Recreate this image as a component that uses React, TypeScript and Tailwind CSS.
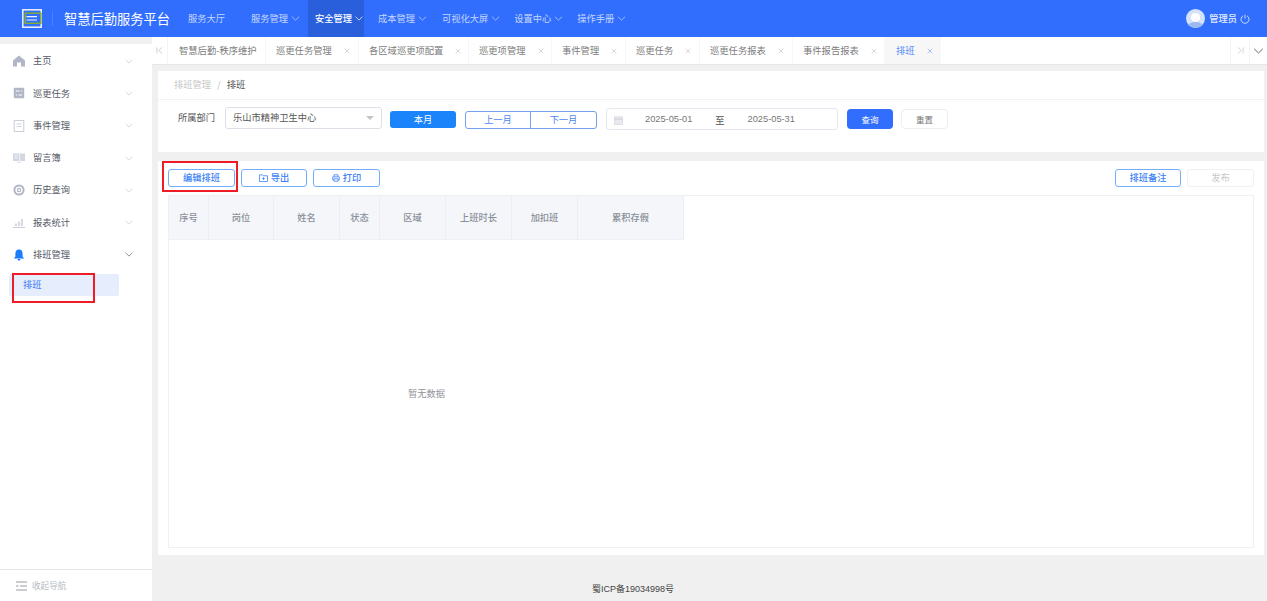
import React from "react";

const font = { fontFamily: '"Noto Sans CJK SC", "Liberation Sans", sans-serif' };

function Chev({ className = "" }: { className?: string }) {
  return (
    <svg viewBox="0 0 10 6" className={className} fill="none" stroke="currentColor" strokeWidth="0.9">
      <path d="M0.7 0.8 L5 5 L9.3 0.8" />
    </svg>
  );
}

function X() {
  return (
    <svg viewBox="0 0 8 8" className="h-[6px] w-[6px]" fill="none" stroke="currentColor" strokeWidth="1">
      <path d="M1 1 L7 7 M7 1 L1 7" />
    </svg>
  );
}

function NavItem({ label, cls }: { label: string; cls: string }) {
  return (
    <div className={`flex items-center text-[9.25px] text-[#c4d6ff] ${cls}`}>
      <span>{label}</span>
      <Chev className="ml-[3px] h-[5px] w-[9px]" />
    </div>
  );
}

function Header() {
  return (
    <header className="flex h-[37px] shrink-0 items-center bg-[#316efe] text-white">
      <svg viewBox="0 0 20 19" className="ml-[22px] h-[19px] w-[20px]">
        <rect x="0.8" y="0.8" width="18.4" height="17.4" fill="none" stroke="#e4ecff" strokeWidth="1.6" />
        <rect x="3.2" y="4.2" width="15.6" height="10" fill="none" stroke="#7fae3a" strokeWidth="1.5" />
        <path d="M4.5 7.6 H15 M4.5 11 H15" stroke="#f0f5ff" strokeWidth="1.1" />
      </svg>
      <div className="ml-[10px] h-[15px] w-px bg-[#4a80fe]" />
      <div className="ml-[11px] w-[106px] whitespace-nowrap text-[13.25px] leading-none">智慧后勤服务平台</div>
      <div className="ml-[18px] text-[9.25px] text-[#c4d6ff]">服务大厅</div>
      <NavItem label="服务管理" cls="ml-[26px]" />
      <div className="ml-[8px] flex h-full w-[56px] items-center bg-[#2a5fdc] pl-[7px] text-[9.25px] font-medium text-white">
        <span className="whitespace-nowrap">安全管理</span>
        <Chev className="ml-[3px] h-[5px] w-[8px] shrink-0" />
      </div>
      <NavItem label="成本管理" cls="ml-[14px]" />
      <NavItem label="可视化大屏" cls="ml-[15px]" />
      <NavItem label="设置中心" cls="ml-[14px]" />
      <NavItem label="操作手册" cls="ml-[14px]" />
      <div className="ml-auto mr-[17px] flex items-center">
        <svg viewBox="0 0 19 19" className="h-[19px] w-[19px]">
          <defs>
            <clipPath id="avatarClip"><circle cx="9.5" cy="9.5" r="9.5" /></clipPath>
          </defs>
          <circle cx="9.5" cy="9.5" r="9.5" fill="#d5e2fb" />
          <g clipPath="url(#avatarClip)">
            <ellipse cx="9.5" cy="18" rx="8" ry="5" fill="#9db9ee" />
            <circle cx="9.5" cy="8.5" r="4.6" fill="#ffffff" />
          </g>
        </svg>
        <span className="ml-[4px] text-[9.25px] font-medium text-[#e4ecff]">管理员</span>
        <svg viewBox="0 0 12 12" className="ml-[3px] h-[10px] w-[10px]" fill="none" stroke="#e4ecff" strokeWidth="1">
          <path d="M3.6 2.2 A4.8 4.8 0 1 0 8.4 2.2" />
          <path d="M6 0.8 V5.6" />
        </svg>
      </div>
    </header>
  );
}

const iconColor = "#b0b6c6";

const menuIcons: Record<string, React.ReactNode> = {
  home: <path d="M6 0.6 L12 5.6 V11.4 H8 V7.5 H4 V11.4 H0 V5.6 Z" fill={iconColor} />,
  task: (
    <>
      <rect x="0.8" y="0.8" width="10.4" height="10.4" rx="0.8" fill={iconColor} />
      <path d="M2.8 4 H6.5 M8 4 H9.2 M2.8 8 H4 M5.5 8 H9.2" stroke="#fff" strokeWidth="1" />
    </>
  ),
  event: (
    <>
      <rect x="1.2" y="0.6" width="9.6" height="10.8" fill="none" stroke="#c3c8d5" strokeWidth="0.9" />
      <path d="M3.5 4 H8.5 M3.5 6.5 H8.5" stroke="#c3c8d5" strokeWidth="0.8" />
    </>
  ),
  book: (
    <>
      <rect x="0" y="1.5" width="12" height="7.5" fill="#d3d7e1" />
      <path d="M6.5 1.5 V9 M1.5 3.6 H4.8 M1.5 5.8 H4.8" stroke="#fff" strokeWidth="0.7" />
      <path d="M4 10.3 H8" stroke="#d3d7e1" strokeWidth="0.8" />
    </>
  ),
  hist: (
    <>
      <circle cx="6" cy="6" r="4.6" fill="none" stroke={iconColor} strokeWidth="2" />
      <circle cx="6" cy="6" r="1.6" fill="none" stroke={iconColor} strokeWidth="1.2" />
    </>
  ),
  chart: (
    <>
      <path d="M3 9 V6.5 M6 9 V4.5 M9 9 V2" stroke="#c3c8d5" strokeWidth="1.4" />
      <path d="M0 10.5 H12" stroke="#c3c8d5" strokeWidth="0.9" />
    </>
  ),
  bell: (
    <>
      <path d="M6 0.6 C3 0.6 2.4 3 2.4 5 V7.5 L0.8 9.4 H11.2 L9.6 7.5 V5 C9.6 3 9 0.6 6 0.6 Z" fill="#1a7dfa" />
      <path d="M4.4 10.1 H7.6 L6.9 11.4 H5.1 Z" fill="#1a7dfa" />
    </>
  ),
};

function MenuItem({ icon, label, open }: { icon: string; label: string; open?: boolean }) {
  return (
    <div className="flex h-[32.3px] items-center pl-[13px] pr-[19px]">
      <svg viewBox="0 0 12 12" className="h-[12px] w-[12px] shrink-0">{menuIcons[icon]}</svg>
      <span className="ml-[8px] text-[9.25px] text-[#555a66]">{label}</span>
      <Chev className={`ml-auto h-[5px] w-[8px] ${open ? "text-[#666]" : "text-[#c8ccd4]"}`} />
    </div>
  );
}

function Sidebar() {
  return (
    <aside className="relative mt-[7px] flex w-[152px] shrink-0 flex-col bg-white">
      <div className="pt-[1px]">
        <MenuItem icon="home" label="主页" />
        <MenuItem icon="task" label="巡更任务" />
        <MenuItem icon="event" label="事件管理" />
        <MenuItem icon="book" label="留言簿" />
        <MenuItem icon="hist" label="历史查询" />
        <MenuItem icon="chart" label="报表统计" />
        <MenuItem icon="bell" label="排班管理" open />
      </div>
      <div className="ml-[9px] mt-[3px] flex h-[22px] w-[110px] items-center rounded-[2px] bg-[#e6edfd] pl-[14px] text-[9.25px] text-[#3f7bf7]">
        排班
      </div>
      <div className="absolute left-[12px] top-[229px] h-[30px] w-[83px] border-2 border-[#ee1c25]" />
      <div className="mt-auto flex h-[32px] items-center border-t border-[#e8e8e8] pl-[16px]">
        <svg viewBox="0 0 11 10" className="h-[10px] w-[11px]" stroke="#8a8f99" strokeWidth="0.9" fill="none">
          <path d="M0 1 H11 M4 5 H11 M0 9 H11 M0 5 H2.5" />
        </svg>
        <span className="ml-[5px] text-[8.6px] text-[#b5bac4]">收起导航</span>
      </div>
    </aside>
  );
}

const tabs = [
  { t: "智慧后勤-秩序维护", w: "w-[98px]", pl: "pl-[11px]" },
  { t: "巡更任务管理", w: "w-[93px]", x: true, pl: "pl-[10px]" },
  { t: "各区域巡更项配置", w: "w-[110px]", x: true, pl: "pl-[10px]" },
  { t: "巡更项管理", w: "w-[83px]", x: true, pl: "pl-[10px]" },
  { t: "事件管理", w: "w-[74px]", x: true, pl: "pl-[10px]" },
  { t: "巡更任务", w: "w-[74px]", x: true, pl: "pl-[10px]" },
  { t: "巡更任务报表", w: "w-[93px]", x: true, pl: "pl-[10px]" },
  { t: "事件报告报表", w: "w-[92px]", x: true, pl: "pl-[10px]" },
];

function Tabs() {
  return (
    <div className="flex h-[28px] shrink-0 items-center border-b border-[#e6e6e6] bg-white text-[9.3px] text-[#7d7d7d]">
      <div className="flex h-full w-[16px] items-center justify-center border-r border-[#f5f5f5] text-[#c2c2c2]">
        <svg viewBox="0 0 8 8" className="h-[7px] w-[7px]" fill="none" stroke="currentColor" strokeWidth="0.9">
          <path d="M1 0.5 V7.5 M7 0.5 L3 4 L7 7.5" />
        </svg>
      </div>
      {tabs.map((tab) => (
        <div key={tab.t} className={`flex h-full shrink-0 items-center border-r border-[#f7f7f7] ${tab.pl} ${tab.w}`}>
          <span className="whitespace-nowrap">{tab.t}</span>
          {tab.x && (
            <span className="ml-[12px] text-[#c9c9c9]">
              <X />
            </span>
          )}
        </div>
      ))}
      <div className="flex h-full w-[56px] shrink-0 items-center bg-[#f7f7f7] pl-[11px] text-[#5b8ff9]">
        <span>排班</span>
        <span className="ml-[12px] text-[#8fb0f5]">
          <X />
        </span>
      </div>
      <div className="ml-auto flex h-full w-[20px] items-center justify-center border-x border-[#f5f5f5] text-[#c9c9c9]">
        <svg viewBox="0 0 8 8" className="h-[7px] w-[7px]" fill="none" stroke="currentColor" strokeWidth="0.9">
          <path d="M7 0.5 V7.5 M1 0.5 L5 4 L1 7.5" />
        </svg>
      </div>
      <div className="flex h-full w-[17px] items-center justify-center text-[#555]">
        <Chev className="h-[6px] w-[11px]" />
      </div>
    </div>
  );
}

function OutlineBtn({ children, w }: { children: React.ReactNode; w: string }) {
  return (
    <button className={`flex h-[18px] items-center justify-center rounded-[3px] border border-[#73aefc] bg-white text-[9.25px] font-medium text-[#3b82f6] ${w}`}>
      {children}
    </button>
  );
}

function FilterCard() {
  return (
    <section className="h-[81px] shrink-0 bg-white">
      <div className="flex h-[29px] items-center border-b border-[#f2f2f2] pl-[16px] text-[9.25px]">
        <span className="text-[#c8c8c8]">排班管理</span>
        <span className="mx-[6px] text-[#c0c0c0]">/</span>
        <span className="text-[#555]">排班</span>
      </div>
      <div className="flex items-start pl-[20px] pt-[7px]">
        <span className="mt-[4px] w-[47px] whitespace-nowrap text-[9.25px] text-[#555]">所属部门</span>
        <div className="flex h-[22px] w-[157px] items-center justify-between rounded-[3px] border border-[#dcdfe6] pl-[7px] pr-[7px] text-[9.25px] text-[#555]">
          <span>乐山市精神卫生中心</span>
          <span className="h-0 w-0 border-x-[4px] border-t-[4px] border-x-transparent border-t-[#c4c4c4]" />
        </div>
        <button className="ml-[8px] mt-[4px] h-[17px] w-[66px] rounded-[3px] bg-[#1c84fa] text-[9.25px] text-white">本月</button>
        <div className="ml-[9px] mt-[4px] flex h-[18px] w-[132px] rounded-[3px] border border-[#73a0f0] text-[9.25px] text-[#4b86f4]">
          <span className="flex w-[65px] items-center justify-center border-r border-[#73a0f0]">上一月</span>
          <span className="flex flex-1 items-center justify-center">下一月</span>
        </div>
        <div className="ml-[9px] mt-[1px] flex h-[22px] w-[232px] items-center rounded-[3px] border border-[#e6e8ef] text-[9.25px] text-[#777]">
          <svg viewBox="0 0 10 10" className="ml-[7px] mt-[3px] h-[9px] w-[9px]">
            <rect x="0.5" y="1" width="9" height="8.5" fill="#e8eaef" stroke="#cfd2d9" strokeWidth="0.7" />
            <path d="M0.5 3.5 H9.5" stroke="#c5c8d0" strokeWidth="0.8" />
          </svg>
          <span className="ml-[22px] mt-[1px]" style={{ fontFamily: '"Liberation Sans", sans-serif' }}>2025-05-01</span>
          <span className="ml-[23px] mt-[3px] text-[#555]">至</span>
          <span className="ml-[23px] mt-[1px]" style={{ fontFamily: '"Liberation Sans", sans-serif' }}>2025-05-31</span>
        </div>
        <button className="ml-[9px] mt-[2px] h-[20px] w-[46px] rounded-[4px] bg-[#316efe] text-[8.5px] text-white">查询</button>
        <button className="ml-[8px] mt-[2px] h-[20px] w-[47px] rounded-[4px] border border-[#eeeeee] text-[8.5px] text-[#777]">重置</button>
      </div>
    </section>
  );
}

const cols = [
  { t: "序号", w: "w-[40px]" },
  { t: "岗位", w: "w-[65px]" },
  { t: "姓名", w: "w-[66px]" },
  { t: "状态", w: "w-[40px]" },
  { t: "区域", w: "w-[66px]" },
  { t: "上班时长", w: "w-[66px]" },
  { t: "加扣班", w: "w-[66px]" },
  { t: "累积存假", w: "w-[106px]" },
];

function TableCard() {
  return (
    <section className="relative mt-[9px] flex h-[394px] shrink-0 flex-col bg-white px-[10px] pb-[7px]">
      <div className="absolute left-[4px] top-0 h-[31px] w-[76px] border-2 border-[#ee1c25]" />
      <div className="flex h-[34px] shrink-0 items-center">
        <OutlineBtn w="w-[67px]">编辑排班</OutlineBtn>
        <div className="ml-[6px]">
          <OutlineBtn w="w-[66px]">
            <svg viewBox="0 0 10 9" className="mr-[3px] h-[8px] w-[9px]" fill="none" stroke="currentColor" strokeWidth="0.9">
              <path d="M0.5 1 H4 L5 2 H9.5 V8.5 H0.5 Z M5 3.6 V6.6 M3.5 5.1 H6.5" />
            </svg>
            导出
          </OutlineBtn>
        </div>
        <div className="ml-[6px]">
          <OutlineBtn w="w-[67px]">
            <svg viewBox="0 0 10 10" className="mr-[3px] h-[8px] w-[8px]" fill="none" stroke="currentColor" strokeWidth="1">
              <path d="M2.5 3.5 V1 H7.5 V3.5 M2.5 7.5 H1 V3.5 H9 V7.5 H7.5 M2.5 6 H7.5 V9 H2.5 Z" />
            </svg>
            打印
          </OutlineBtn>
        </div>
        <div className="ml-auto flex">
          <OutlineBtn w="w-[66px]">排班备注</OutlineBtn>
          <button className="ml-[6px] flex h-[18px] w-[67px] items-center justify-center rounded-[3px] border border-[#f0f1f4] text-[9.25px] text-[#c8c8c8]">发布</button>
        </div>
      </div>
      <div className="flex flex-1 flex-col border border-[#eef0f5]">
        <div className="flex h-[43px] shrink-0">
          {cols.map((c) => (
            <div key={c.t} className={`flex items-center justify-center border-r border-[#eceef3] bg-[#f4f6fa] text-[9.25px] font-medium text-[#8a8f99] ${c.w}`}>
              {c.t}
            </div>
          ))}
        </div>
        <div className="flex w-[515px] flex-1 items-center justify-center border-t border-[#eef0f5] text-[9.25px] text-[#909399]">
          暂无数据
        </div>
      </div>
    </section>
  );
}

export default function App() {
  return (
    <div className="flex h-[601px] w-[1267px] flex-col overflow-hidden bg-[#f0f0f0]" style={font}>
      <Header />
      <div className="flex min-h-0 flex-1">
        <Sidebar />
        <main className="flex min-w-0 flex-1 flex-col">
          <Tabs />
          <div className="flex flex-1 flex-col pl-[6px] pr-[3px] pt-[6px]">
            <FilterCard />
            <TableCard />
            <div
              className="mt-[28px] pl-[434px] text-[9px] text-[#444]"
              style={{ fontFamily: '"Liberation Sans", "Noto Sans CJK SC", sans-serif' }}
            >
              蜀ICP备19034998号
            </div>
          </div>
        </main>
      </div>
    </div>
  );
}
